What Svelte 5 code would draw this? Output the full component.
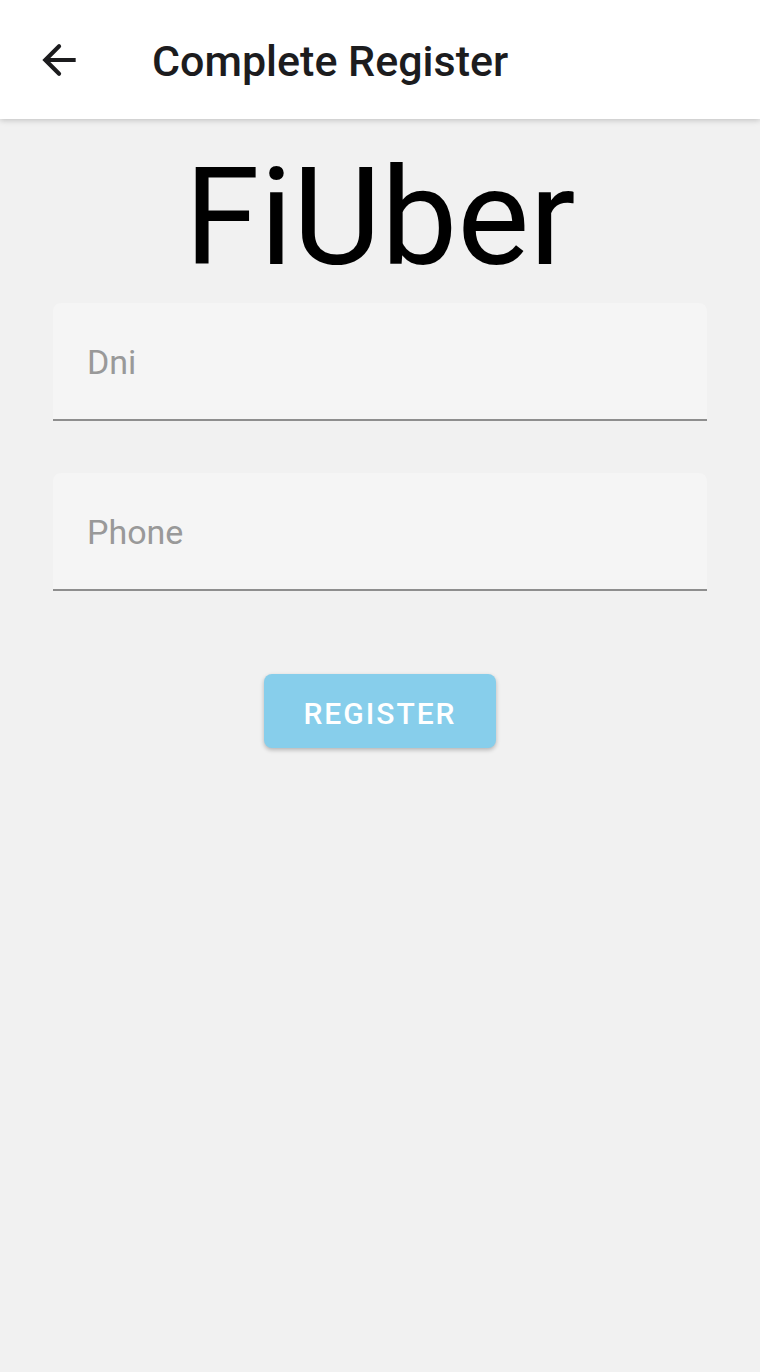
<script>
  let dni = $state('');
  let phone = $state('');
</script>

<div class="screen">
  <header>
    <button class="back" type="button" aria-label="Go back">
      <svg viewBox="0 0 24 24" aria-hidden="true"><path d="M20 11H7.83l4.9-4.9q.7-.7 0-1.4t-1.4 0L4 12l7.33 7.33q.7.7 1.4 0t0-1.4L7.83 13H20v-2z" /></svg>
    </button>
    <h1>Complete Register</h1>
  </header>
  <main>
    <p class="brand">FiUber</p>
    <form onsubmit={(e) => e.preventDefault()}>
      <input aria-label="Dni" placeholder="Dni" bind:value={dni} />
      <input aria-label="Phone" placeholder="Phone" type="tel" bind:value={phone} />
      <button class="register" type="submit">REGISTER</button>
    </form>
  </main>
</div>

<style>
  :global(body) {
    margin: 0;
    background: #f1f1f1;
  }
  .screen {
    min-height: 100vh;
    font-family: Roboto, sans-serif;
    background: #f1f1f1;
  }
  header {
    display: flex;
    align-items: center;
    gap: 68px;
    height: 119px;
    padding: 0 34px;
    background: #fff;
    box-shadow: 0 1px 6px rgba(0, 0, 0, 0.22);
  }
  .back {
    display: flex;
    padding: 0;
    border: 0;
    background: none;
  }
  .back svg {
    width: 50px;
    height: 50px;
    fill: #1c1c1e;
  }
  h1 {
    margin: 0;
    padding-top: 2px;
    font-size: 43px;
    line-height: 56px;
    font-weight: 500;
    color: #1c1c1e;
  }
  main {
    padding: 14px 53px;
  }
  .brand {
    margin: 0;
    font-size: 136px;
    line-height: 170px;
    text-align: center;
    color: #000;
  }
  form {
    display: flex;
    flex-direction: column;
    align-items: center;
  }
  input {
    box-sizing: border-box;
    width: 100%;
    height: 118px;
    margin-bottom: 52px;
    padding: 2px 34px 0;
    border: 0;
    border-bottom: 2px solid #8e8e8e;
    border-radius: 8px 8px 0 0;
    outline: 0;
    background: #f5f5f5;
    font: 34px Roboto, sans-serif;
    color: #000;
  }
  input::placeholder {
    color: #999;
    opacity: 1;
  }
  .register {
    margin-top: 31px;
    padding: 4px 39px 0;
    height: 74px;
    border: 0;
    border-radius: 8px;
    background: #87ceeb;
    box-shadow: 0 2px 4px rgba(0, 0, 0, 0.25);
    font: 500 30px Roboto, sans-serif;
    letter-spacing: 2px;
    color: #fff;
  }
</style>
